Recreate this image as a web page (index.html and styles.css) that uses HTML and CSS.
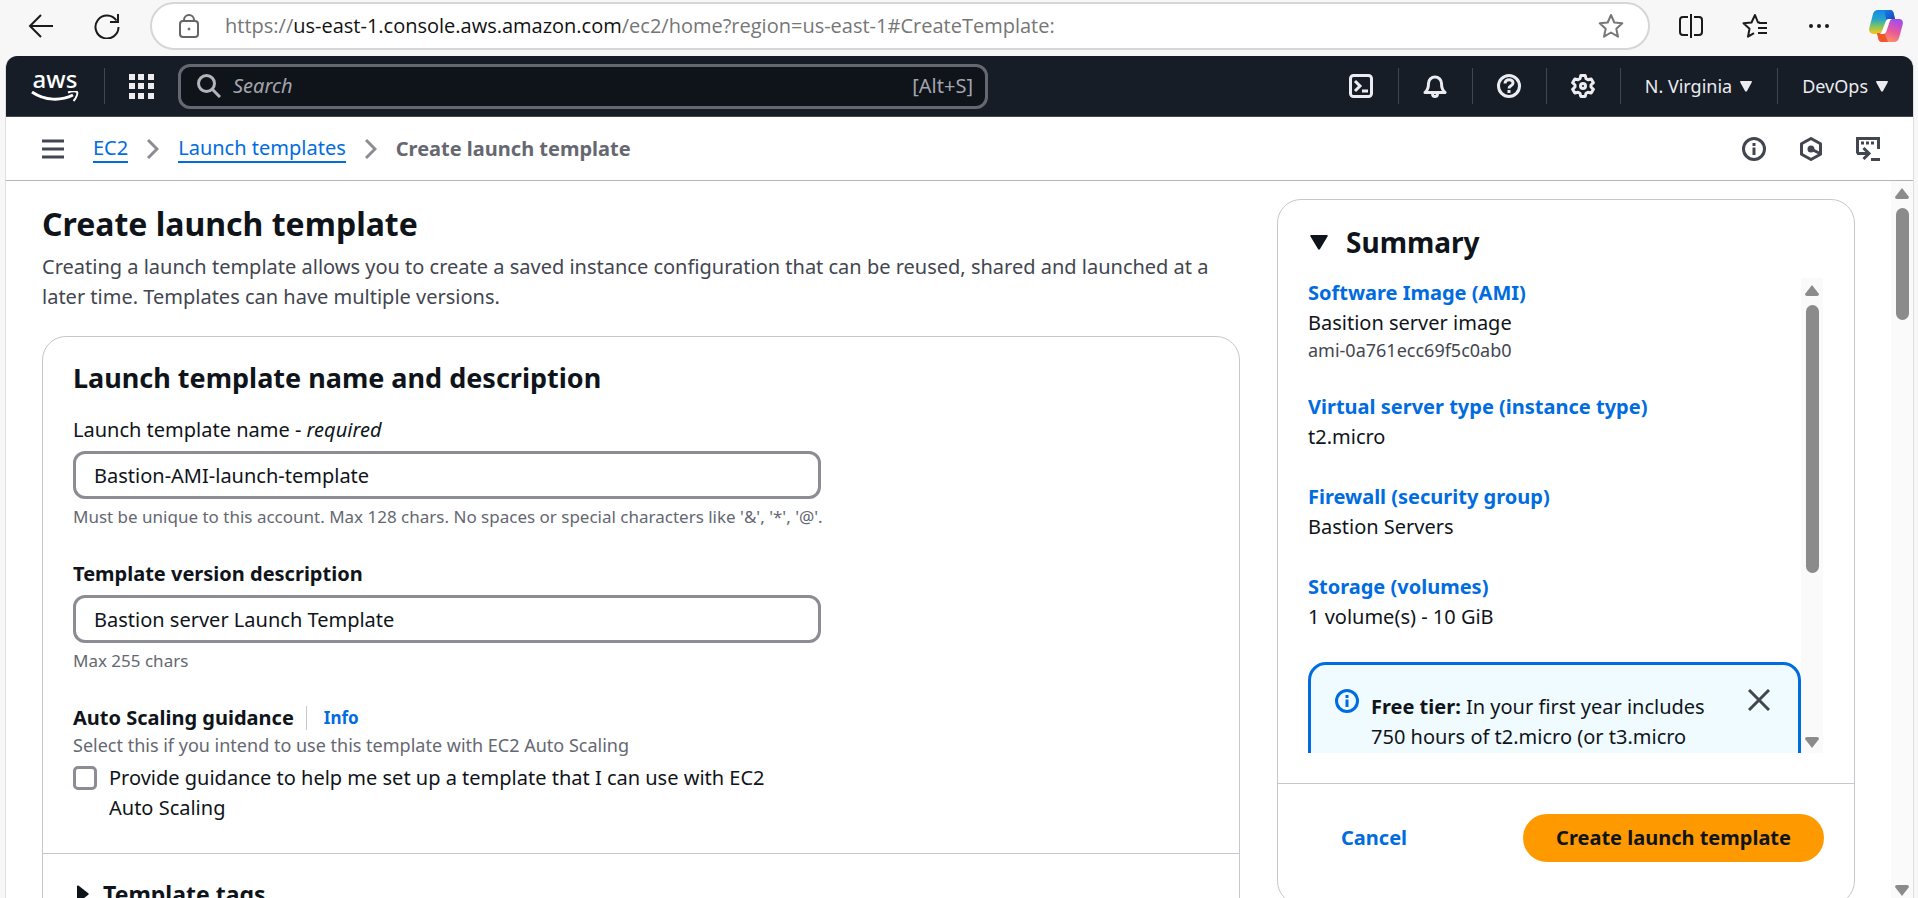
FILE: index.html
```html
<!DOCTYPE html>
<html lang="en">
<head>
<meta charset="utf-8">
<title>Create launch template</title>
<link rel="stylesheet" href="styles.css">
</head>
<body>
<div class="browser">
  <div class="toolbar">
    <button class="tool back" aria-label="Back"><svg width="26" height="26" viewBox="0 0 26 26" fill="none" stroke="#1b1b1b" stroke-width="2"><path d="M25 13H2M13 2 2 13l11 11"/></svg></button>
    <button class="tool reload" aria-label="Reload"><svg width="26" height="26" viewBox="0 0 26 26" fill="none" stroke="#1b1b1b" stroke-width="2"><path d="M22.500 7.500A11.500 11.500 0 1 0 24.500 14M24 1v8h-8"/></svg></button>
    <div class="address">
      <svg width="20" height="24" viewBox="0 0 20 24" fill="none" stroke="#666" stroke-width="2"><rect x="1" y="7" width="18" height="16" rx="3"/><path d="M5 7V6a5 5 0 0 1 10 0v1"/><circle cx="10" cy="15" r="1" fill="#666" stroke-width="1"/></svg>
      <span class="url">https://<b>us-east-1.console.aws.amazon.com</b>/ec2/home?region=us-east-1#CreateTemplate:</span>
      <button class="tool" aria-label="Add to favorites"><svg width="26" height="26" viewBox="0 0 26 26" fill="none" stroke="#777" stroke-width="2" stroke-linejoin="round"><path d="m13 2 3.300 7.500 8 .8-6 5.400 1.700 8L13 19.500l-7 4.200 1.700-8-6-5.400 8-.8z"/></svg></button>
    </div>
    <div class="tools">
      <button class="tool" aria-label="Split screen"><svg width="24" height="24" viewBox="0 0 24 24" fill="none" stroke="#1b1b1b" stroke-width="2"><path d="M9 3H4a3 3 0 0 0-3 3v12a3 3 0 0 0 3 3h5M15 3h5a3 3 0 0 1 3 3v12a3 3 0 0 1-3 3h-5M12 0v24"/></svg></button>
      <button class="tool" aria-label="Favorites"><svg width="26" height="26" viewBox="0 0 26 26" fill="none" stroke="#1b1b1b" stroke-width="2" stroke-linejoin="round"><path d="M18 9.500h-2L13 2 9.500 9.500l-8 .8 6 5.400-1.500 8 6-3.500M17 10h8M16 15h9M16 20h9"/></svg></button>
      <button class="tool" aria-label="Settings and more"><svg width="22" height="6" viewBox="0 0 22 6" fill="#1b1b1b"><circle cx="3" cy="3" r="2"/><circle cx="11" cy="3" r="2"/><circle cx="19" cy="3" r="2"/></svg></button>
      <button class="tool" aria-label="Copilot"><svg width="34" height="32" viewBox="0 0 34 32">
        <defs>
          <linearGradient id="ca" x1="0" y1="0" x2="0" y2="1"><stop offset="0" stop-color="#1387e8"/><stop offset=".4" stop-color="#28a6c8"/><stop offset=".7" stop-color="#8bc45a"/><stop offset="1" stop-color="#ffc51c"/></linearGradient>
          <linearGradient id="cb" x1="0.700" y1="0" x2="0.300" y2="1"><stop offset="0" stop-color="#a24cf0"/><stop offset=".5" stop-color="#e8589c"/><stop offset="1" stop-color="#ff9a5a"/></linearGradient>
          <linearGradient id="cc" x1="0" y1="0" x2="1" y2="1"><stop offset="0" stop-color="#1a7ee8"/><stop offset="1" stop-color="#1740b8"/></linearGradient>
        </defs>
        <path d="M9 0h12c2 0 3 1 3.600 3L26 9h-5c-2 0-3 1-4 4l-3 8c-1 2-2 3-4 3H4c-3 0-4.500-3-3.700-6L4 4c.8-2.800 2.400-4 5-4z" fill="url(#ca)"/>
        <path d="M15 0h6c2 0 3 1 3.600 3L26 9h-5c-1.500 0-2.500.6-3.300 2z" fill="url(#cc)"/>
        <path d="M25 32H13c-2 0-3-1-3.600-3L8 23h3c2 0 3-1 4-4l3-7c1-2 2-3 4-3h8c3 0 4.500 2.500 3.700 5.500L30 28c-.8 2.800-2.400 4-5 4z" fill="url(#cb)"/>
        <path d="M19 32h-6c-2 0-3-1-3.600-3L8 23h3c1.600 0 2.600-.8 3.400-2.400z" fill="#f0562c"/>
        <path d="M20 9h-.5c-1.500 0-2.300 1-3 3L13 21c-.6 1.600-1.300 2.500-2.500 3H14c1.800 0 2.800-1 3.500-3l3-9c.6-1.600 1.200-2.500 2.500-3z" fill="#fff"/>
      </svg></button>
    </div>
  </div>

  <div class="window">
    <header class="nav">
      <a class="logo" href="#" aria-label="AWS home"><span class="logo-text">aws</span><svg width="48" height="13" viewBox="0 0 48 13"><path d="M1 1c13 9 29 9 41 3" fill="none" stroke="#fff" stroke-width="3"/><path d="M37 1.500c4-1.500 8-1.500 9-.5s-.5 6-3.500 9" fill="none" stroke="#fff" stroke-width="2"/></svg></a>
      <span class="rule"></span>
      <button class="icon-btn grid-btn" aria-label="Services"><svg width="25" height="25" viewBox="0 0 25 25" fill="#ebebf0"><path d="M0 0h6v6H0zM9 0h6v6H9zM19 0h6v6h-6zM0 9h6v6H0zM9 9h6v6H9zM19 9h6v6h-6zM0 19h6v6H0zM9 19h6v6H9zM19 19h6v6h-6z"/></svg></button>
      <label class="search">
        <svg width="24" height="24" viewBox="0 0 24 24" fill="none" stroke="#b4b4bb" stroke-width="3"><circle cx="9.500" cy="9.500" r="8"/><path d="m15 15 8 8"/></svg>
        <input type="text" placeholder="Search" aria-label="Search">
        <span>[Alt+S]</span>
      </label>
      <div class="nav-right">
        <button class="cell" aria-label="CloudShell"><svg width="24" height="24" viewBox="0 0 24 24" fill="none" stroke="#ebebf0" stroke-width="3"><rect x="1.500" y="1.500" width="21" height="21" rx="3"/><path d="m6 7 5 5-5 5M13 17h6"/></svg></button>
        <button class="cell" aria-label="Notifications"><svg width="24" height="24" viewBox="0 0 24 24" fill="none" stroke="#ebebf0" stroke-width="3" stroke-linejoin="round"><path d="M2 18.500c3-2.500 3.500-5 3.500-9a6.500 6.500 0 0 1 13 0c0 4 .5 6.500 3.500 9z"/><path d="M9.500 19.500c0 4 5 4 5 0" /></svg></button>
        <button class="cell" aria-label="Help"><svg width="24" height="24" viewBox="0 0 24 24" fill="none" stroke="#ebebf0" stroke-width="3"><circle cx="12" cy="12" r="10.500"/><path d="M8 9.500c0-5 8-5 8-.5 0 3-4 2.500-4 5.500M12 16v3"/></svg></button>
        <button class="cell" aria-label="Settings"><svg width="24" height="24" viewBox="0 0 24 24" fill="none" stroke="#ebebf0" stroke-width="3" stroke-linejoin="round"><path d="M9.800 1.500h4.400l.8 3.200 2 1.100 3.200-.9 2.200 3.800L20 11v2l2.400 2.300-2.200 3.800-3.200-.9-2 1.100-.8 3.200H9.800L9 19.300l-2-1.100-3.200.9-2.200-3.800L4 13v-2L1.600 8.700l2.200-3.800 3.200.9 2-1.100z"/><circle cx="12" cy="12" r="2.500"/></svg></button>
        <button class="cell wide">N. Virginia<svg width="12" height="11" viewBox="0 0 12 11" fill="#ebebf0"><path d="M1 0h10q1.500 0 .8 1.200L7 10q-1 1.500-2 0L.2 1.200Q-.5 0 1 0z"/></svg></button>
        <button class="cell wide">DevOps<svg width="12" height="11" viewBox="0 0 12 11" fill="#ebebf0"><path d="M1 0h10q1.500 0 .8 1.200L7 10q-1 1.500-2 0L.2 1.200Q-.5 0 1 0z"/></svg></button>
      </div>
    </header>

    <div class="crumbs">
      <button class="icon-btn" aria-label="Open navigation"><svg width="22" height="20" viewBox="0 0 22 20" fill="none" stroke="#424650" stroke-width="3"><path d="M0 2h22M0 10h22M0 18h22"/></svg></button>
      <nav class="trail" aria-label="Breadcrumbs">
        <a href="#">EC2</a>
        <svg width="12" height="20" viewBox="0 0 12 20" fill="none" stroke="#8c8c94" stroke-width="3"><path d="m1 1 9 9-9 9"/></svg>
        <a href="#">Launch templates</a>
        <svg width="12" height="20" viewBox="0 0 12 20" fill="none" stroke="#8c8c94" stroke-width="3"><path d="m1 1 9 9-9 9"/></svg>
        <span>Create launch template</span>
      </nav>
      <div class="crumb-tools">
        <button class="icon-btn" aria-label="Info"><svg width="24" height="24" viewBox="0 0 24 24" fill="none" stroke="#424650" stroke-width="3"><circle cx="12" cy="12" r="10.500"/><path d="M12 6v3M12 10.500V18"/></svg></button>
        <button class="icon-btn" aria-label="Amazon Q"><svg width="24" height="24" viewBox="0 0 24 24" fill="none" stroke="#424650" stroke-width="3" stroke-linejoin="round"><path d="m12 1.500 9.500 5.300v10.400L12 22.500l-9.500-5.300V6.800z"/><path d="m12 12 9 4.500"/><circle cx="12" cy="12" r="2" fill="#424650"/></svg></button>
        <button class="icon-btn" aria-label="Console to code"><svg width="24" height="24" viewBox="0 0 24 24" fill="none" stroke="#424650" stroke-width="3"><path d="M1.500 16.500v-15h21V12M1 16.500h11M7.500 11l5.500 5.500L7.500 22M15 22.500h9"/><path d="M5 6h3M10 6h3M15 6h3"/></svg></button>
      </div>
    </div>

    <div class="page">
      <main class="main">
        <h1>Create launch template</h1>
        <p class="intro">Creating a launch template allows you to create a saved instance configuration that can be reused, shared and launched at a later time. Templates can have multiple versions.</p>
        <section class="card">
          <div class="card-body">
            <h2>Launch template name and description</h2>
            <div class="field">
              <label for="name">Launch template name - <i>required</i></label>
              <input id="name" type="text" value="Bastion-AMI-launch-template">
              <p class="hint">Must be unique to this account. Max 128 chars. No spaces or special characters like '&amp;', '*', '@'.</p>
            </div>
            <div class="field">
              <label class="strong" for="desc">Template version description</label>
              <input id="desc" type="text" value="Bastion server Launch Template">
              <p class="hint">Max 255 chars</p>
            </div>
            <div class="guidance">
              <div class="guidance-head"><span class="strong">Auto Scaling guidance</span><a href="#">Info</a></div>
              <p class="sub">Select this if you intend to use this template with EC2 Auto Scaling</p>
              <div class="check"><input id="asg" type="checkbox"><label for="asg">Provide guidance to help me set up a template that I can use with EC2 Auto Scaling</label></div>
            </div>
          </div>
          <button class="expander"><svg width="12" height="18" viewBox="0 0 12 18" fill="#0f141a"><path d="M0 1.500Q0 0 1.400.6L11 8q1.500 1 0 2L1.400 17.400Q0 18 0 16.500z"/></svg>Template tags</button>
        </section>
      </main>

      <aside class="summary">
        <button class="summary-title"><svg width="18" height="15" viewBox="0 0 18 15" fill="#0f141a"><path d="M1.500 0h15Q18.500 0 17.500 1.600L10 14q-1 1.500-2 0L.5 1.600Q-.5 0 1.500 0z"/></svg>Summary</button>
        <div class="scroller">
          <div class="items">
            <div class="item"><a href="#">Software Image (AMI)</a><p>Basition server image</p><p class="small">ami-0a761ecc69f5c0ab0</p></div>
            <div class="item"><a href="#">Virtual server type (instance type)</a><p>t2.micro</p></div>
            <div class="item"><a href="#">Firewall (security group)</a><p>Bastion Servers</p></div>
            <div class="item"><a href="#">Storage (volumes)</a><p>1 volume(s) - 10 GiB</p></div>
            <div class="alert">
              <svg width="24" height="24" viewBox="0 0 24 24" fill="none" stroke="#006ce0" stroke-width="3"><circle cx="12" cy="12" r="10.500"/><path d="M12 6v3M12 10.500V18"/></svg>
              <p><b>Free tier:</b> In your first year includes 750 hours of t2.micro (or t3.micro</p>
              <button class="icon-btn" aria-label="Dismiss"><svg width="22" height="22" viewBox="0 0 22 22" fill="none" stroke="#424650" stroke-width="3"><path d="m1 1 20 20M21 1 1 21"/></svg></button>
            </div>
          </div>
          <div class="bar"><svg width="14" height="11" viewBox="0 0 14 11"><path d="M7 0 14 9q0 2-2 2H2q-2 0-2-2z"/></svg><span class="thumb"></span><svg class="end" width="14" height="11" viewBox="0 0 14 11"><path d="M7 11 14 2q0-2-2-2H2Q0 0 0 2z"/></svg></div>
        </div>
        <div class="actions"><button class="cancel">Cancel</button><button class="primary">Create launch template</button></div>
      </aside>

      <div class="bar page-bar"><svg width="14" height="11" viewBox="0 0 14 11"><path d="M7 0 14 9q0 2-2 2H2q-2 0-2-2z"/></svg><span class="thumb"></span><svg class="end" width="14" height="11" viewBox="0 0 14 11"><path d="M7 11 14 2q0-2-2-2H2Q0 0 0 2z"/></svg></div>
    </div>
  </div>
</div>
</body>
</html>
```
FILE: styles.css
```css
* { box-sizing: border-box; }
body {
  margin: 0;
  font-family: "Noto Sans", "Open Sans", sans-serif;
  font-size: 20px;
  line-height: 30px;
  color: #0f141a;
  background: #f7f7f7;
}
h1, h2, p { margin: 0; }
button { border: 0; padding: 0; background: none; font: inherit; color: inherit; cursor: pointer; }
input { font: inherit; color: inherit; }
a { color: #006ce0; text-decoration: none; }
svg { display: block; flex: none; }

.browser { display: flex; flex-direction: column; height: 100vh; overflow: hidden; }

.toolbar { display: flex; align-items: center; height: 56px; padding: 0 2px 4px 28px; flex: none; }
.reload { margin: 0 30px 0 40px; }
.address {
  flex: 1; display: flex; align-items: center; height: 48px;
  padding: 0 24px 0 27px; border: 2px solid #d6d6d6; border-radius: 24px; background: #fff;
}
.url { flex: 1; margin-left: 26px; font-family: "Open Sans", sans-serif; color: #767676; white-space: nowrap; }
.url b { font-weight: 400; color: #111; }
.tools { display: flex; align-items: center; justify-content: space-between; width: 266px; padding: 0 13px 0 29px; }

.window {
  flex: 1; min-height: 0; display: flex; flex-direction: column;
  margin: 0 4px 0 5px; border: 1px solid #dedede; border-width: 0 1px;
  border-radius: 12px 12px 0 0; overflow: hidden; background: #fff;
}

.nav {
  display: flex; align-items: center; height: 61px; flex: none;
  background: #161d26; border-bottom: 1px solid #424650; color: #ebebf0;
}
.logo { display: flex; flex-direction: column; align-items: center; gap: 2px; width: 48px; margin: 0 25px; color: #fff; }
.logo-text { font-size: 24px; line-height: 20px; font-weight: 500; }
.rule { width: 1px; height: 36px; background: #424650; }
.grid-btn { margin: 0 24px; }
.search {
  display: flex; align-items: center; flex: 0 1 810px; height: 45px; padding: 0 12px 0 16px;
  border: 3px solid #656871; border-radius: 12px; background: #0f141a; color: #a4a4ad;
}
.search input { flex: 1; min-width: 0; margin-left: 10px; padding: 0 2px; border: 0; background: none; outline: 0; }
.search input::placeholder { color: #a4a4ad; font-style: italic; opacity: 1; }
.nav-right { display: flex; align-items: center; margin-left: auto; }
.cell {
  display: flex; align-items: center; justify-content: center; gap: 8px;
  height: 36px; padding: 0 25px 0 24px; border-left: 1px solid #424650;
}
.cell:first-child { border-left: 0; }
.wide { font-size: 18px; }

.crumbs {
  display: flex; align-items: center; height: 64px; flex: none;
  padding: 0 33px 0 36px; border-bottom: 1px solid #b4b4bb;
}
.trail { display: flex; align-items: center; gap: 19px; margin-left: 29px; }
.trail a { line-height: 26px; border-bottom: 2px solid #006ce0; }
.trail span { font-weight: 700; color: #656871; }
.crumb-tools { display: flex; gap: 33px; margin-left: auto; }

.page { flex: 1; min-height: 0; display: flex; align-items: flex-start; }
.main { flex: 1; padding: 24px 37px 0 36px; }
h1 { font-size: 32px; line-height: 38px; }
.intro { margin-top: 9px; color: #424650; }
.card { margin-top: 24px; border: 1px solid #c6c6cd; border-radius: 24px; }
.card-body { padding: 23px 30px 30px; border-bottom: 1px solid #c6c6cd; }
h2 { font-size: 27px; line-height: 36px; }
.field { margin-top: 19px; max-width: 780px; }
.field + .field { margin-top: 30px; }
.field label { display: block; }
.strong { font-weight: 700; }
.field input {
  display: block; width: 748px; max-width: 100%; height: 48px; margin-top: 6px; padding: 0 18px;
  border: 3px solid #8c8c94; border-radius: 12px; background: #fff;
}
.hint { margin-top: 6px; font-size: 17px; line-height: 24px; color: #656871; }
.sub { font-size: 18px; line-height: 24px; color: #656871; }
.guidance { margin-top: 30px; max-width: 720px; }
.guidance-head { display: flex; align-items: center; gap: 12px; }
.guidance-head a { font-size: 17px; line-height: 24px; font-weight: 700; padding-left: 17px; border-left: 1px solid #c6c6cd; }
.check { display: flex; align-items: flex-start; gap: 12px; margin-top: 6px; }
.check input { appearance: none; flex: none; width: 24px; height: 24px; margin: 3px 0; border: 3px solid #8c8c94; border-radius: 5px; background: #fff; }
.expander { display: flex; align-items: center; gap: 14px; width: 100%; padding: 25px 34px; font-size: 23px; font-weight: 700; }

.summary { flex: none; width: 578px; margin-top: 18px; border: 1px solid #c6c6cd; border-radius: 24px; }
.summary-title { display: flex; align-items: center; gap: 18px; padding: 24px 32px 18px; font-size: 28px; line-height: 36px; font-weight: 700; }
.scroller { display: flex; height: calc(100vh - 423px); margin: 0 31px 0 30px; overflow: hidden; }
.items { flex: 1; }
.item { margin-bottom: 30px; }
.item a { font-weight: 700; }
.small { font-size: 18px; line-height: 24px; color: #424650; }
.alert {
  display: flex; align-items: flex-start; gap: 12px; height: 240px; padding: 24px 28px 24px 24px;
  border: 3px solid #006ce0; border-radius: 18px; background: #f0fbff;
}
.alert p { flex: 1; padding-top: 3px; }
.bar { display: flex; flex-direction: column; align-items: center; width: 22px; padding: 7px 0 5px; background: #fafafa; }
.bar svg { fill: #8b8b8b; }
.bar .end { margin-top: auto; }
.thumb { width: 13px; height: 268px; margin-top: 9px; border-radius: 7px; background: #8b8b8b; }
.page-bar { align-self: stretch; margin-left: 36px; padding-bottom: 2px; }
.page-bar .thumb { height: 112px; }
.actions { display: flex; align-items: center; justify-content: space-between; margin-top: 30px; padding: 30px 30px 42px; border-top: 1px solid #c6c6cd; font-weight: 700; }
.cancel { padding: 0 33px; color: #006ce0; }
.primary { height: 48px; padding: 0 33px; border-radius: 24px; background: #ff9900; }
```
